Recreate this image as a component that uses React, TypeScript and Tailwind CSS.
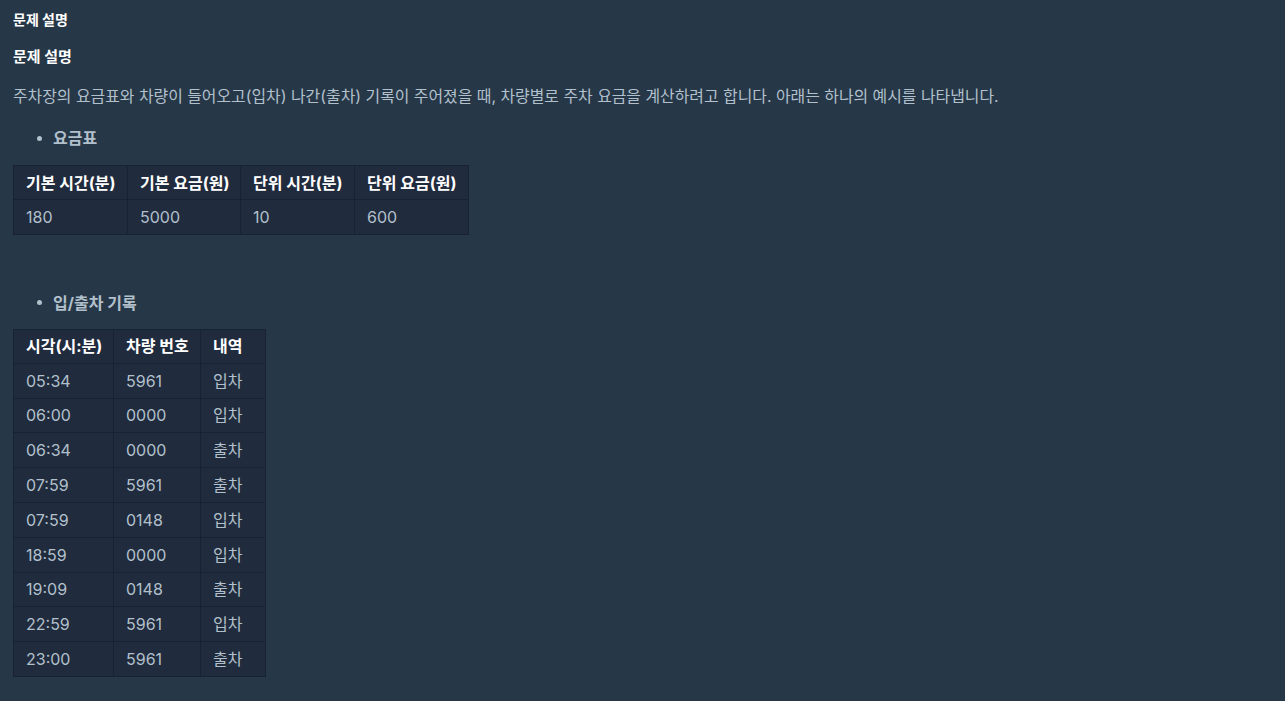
import React from 'react';

const feeHeaders = ['기본 시간(분)', '기본 요금(원)', '단위 시간(분)', '단위 요금(원)'];
const feeRow = ['180', '5000', '10', '600'];

const recordHeaders = ['시각(시:분)', '차량 번호', '내역'];
const records = [
  ['05:34', '5961', '입차'],
  ['06:00', '0000', '입차'],
  ['06:34', '0000', '출차'],
  ['07:59', '5961', '출차'],
  ['07:59', '0148', '입차'],
  ['18:59', '0000', '입차'],
  ['19:09', '0148', '출차'],
  ['22:59', '5961', '입차'],
  ['23:00', '5961', '출차'],
];

const Table = ({ headers, rows, widths, tableWidth }: { headers: string[]; rows: string[][]; widths: string[]; tableWidth: string }) => (
  <table className={`${tableWidth} table-fixed border-collapse border border-[#172334] text-[16px]`}>
    <thead>
      <tr className="bg-[#202b3d]">
        {headers.map((h, i) => (
          <th key={h} className={`${widths[i]} h-[34px] whitespace-nowrap border border-[#172334] px-[12px] text-left font-bold text-white`}>
            {h}
          </th>
        ))}
      </tr>
    </thead>
    <tbody>
      {rows.map((row, r) => (
        <tr key={r} className="bg-[#202b3d]">
          {row.map((c, i) => (
            <td key={i} className="h-[34.8px] whitespace-nowrap border border-[#172334] px-[12px] text-[#b2c0cc]">
              {c}
            </td>
          ))}
        </tr>
      ))}
    </tbody>
  </table>
);

const App = () => {
  return (
    <div
      className="min-h-[701px] bg-[#263747] px-[13px] pt-[12px] text-[#b2c0cc]"
      style={{ fontFamily: 'Inter, "Noto Sans CJK KR", sans-serif' }}
    >
      <h5 className="text-[14px] font-bold text-white leading-[16px]">문제 설명</h5>
      <h6 className="mt-[20px] text-[15px] font-bold text-white leading-[18px]">문제 설명</h6>
      <p className="mt-[19px] text-[15.9px] leading-[24px]">
        주차장의 요금표와 차량이 들어오고(입차) 나간(출차) 기록이 주어졌을 때, 차량별로 주차 요금을 계산하려고 합니다. 아래는 하나의 예시를 나타냅니다.
      </p>

      <ul className="mt-[17px] pl-[24px]">
        <li className="flex items-center gap-[11px] text-[16px] font-bold leading-[24px]">
          <span className="h-[5px] w-[5px] rounded-full bg-[#b2c0cc]" />
          요금표
        </li>
      </ul>
      <div className="mt-[15px]">
        <Table
          headers={feeHeaders}
          rows={[feeRow]}
          widths={['w-[114px]', 'w-[113px]', 'w-[114px]', 'w-[114px]']}
          tableWidth="w-[455px]"
        />
      </div>

      <div className="h-[56px]" />

      <ul className="pl-[24px]">
        <li className="flex items-center gap-[11px] text-[16px] font-bold leading-[24px]">
          <span className="h-[5px] w-[5px] rounded-full bg-[#b2c0cc]" />
          입/출차 기록
        </li>
      </ul>
      <div className="mt-[14px]">
        <Table
          headers={recordHeaders}
          rows={records}
          widths={['w-[100px]', 'w-[87px]', 'w-[65px]']}
          tableWidth="w-[252px]"
        />
      </div>
    </div>
  );
};

export default App;
